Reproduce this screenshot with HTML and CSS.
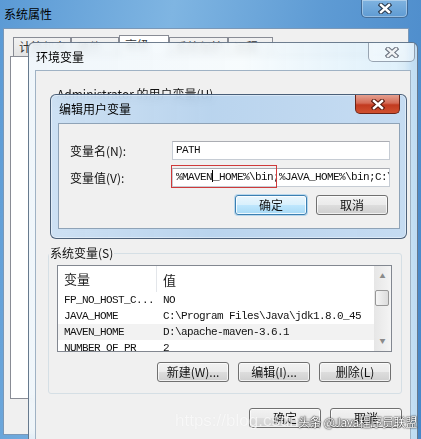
FILE: index.html
```html
<!DOCTYPE html>
<html lang="zh-CN">
<head>
  <meta charset="UTF-8"/>
  <title>环境变量</title>
  <link rel="stylesheet" href="styles.css">
</head>
<body>
  <div class="desk">
    <!-- System properties window (background) -->
    <div class="sys-win">
      <div class="titlebar sys-titlebar">
        <span class="title">系统属性</span>
        <span class="close-btn sys-close">
          <svg viewBox="0 0 14 11" width="14" height="11"><path class="x-outline" d="M3 2L11 9M11 2L3 9"/><path class="x-fill" d="M3 2L11 9M11 2L3 9"/></svg>
        </span>
      </div>
      <div class="sys-body">
        <div class="tabs">
          <span class="tab tab-first">计算机名</span>
          <span class="tab">硬件</span>
          <span class="tab tab-on">高级</span>
          <span class="tab">系统保护</span>
          <span class="tab">远程</span>
        </div>
        <div class="tab-page"></div>
      </div>
    </div>

    <!-- Environment variables dialog -->
    <div class="env-win">
      <div class="titlebar env-titlebar">
        <span class="title">环境变量</span>
        <span class="close-btn env-close">
          <svg viewBox="0 0 14 11" width="14" height="11"><path class="x-outline" d="M3 2L11 9M11 2L3 9"/><path class="x-fill" d="M3 2L11 9M11 2L3 9"/></svg>
        </span>
      </div>
      <div class="env-body">
        <div class="user-label">Administrator 的用户变量(U)</div>
        <div class="user-area"></div>

        <fieldset class="group">
          <legend>系统变量(S)</legend>
          <div class="group-inner">
            <div class="list">
              <div class="list-main">
                <div class="list-head">
                  <span class="col col-name">变量</span>
                  <span class="col col-val">值</span>
                </div>
                <div class="list-row">
                  <span class="col col-name">FP_NO_HOST_C...</span>
                  <span class="col col-val">NO</span>
                </div>
                <div class="list-row">
                  <span class="col col-name">JAVA_HOME</span>
                  <span class="col col-val">C:\Program Files\Java\jdk1.8.0_45</span>
                </div>
                <div class="list-row row-hover">
                  <span class="col col-name">MAVEN_HOME</span>
                  <span class="col col-val">D:\apache-maven-3.6.1</span>
                </div>
                <div class="list-row">
                  <span class="col col-name">NUMBER_OF_PR</span>
                  <span class="col col-val">2</span>
                </div>
              </div>
              <div class="scrollbar">
                <span class="sb-btn">&#9650;</span>
                <div class="sb-track"><div class="sb-thumb"></div></div>
                <span class="sb-btn">&#9660;</span>
              </div>
            </div>
            <div class="btn-row group-btns">
              <button class="btn">新建(W)...</button>
              <button class="btn">编辑(I)...</button>
              <button class="btn">删除(L)</button>
            </div>
          </div>
        </fieldset>

        <div class="btn-row env-btns">
          <button class="btn">确定</button>
          <button class="btn">取消</button>
        </div>
      </div>
    </div>

    <!-- Edit user variable dialog (front) -->
    <div class="edit-win">
      <div class="titlebar edit-titlebar">
        <span class="title">编辑用户变量</span>
        <span class="close-btn edit-close">
          <svg viewBox="0 0 14 11" width="14" height="11"><path class="x-outline" d="M3 2L11 9M11 2L3 9"/><path class="x-fill" d="M3 2L11 9M11 2L3 9"/></svg>
        </span>
      </div>
      <div class="edit-body">
        <div class="field-row">
          <span class="field-label">变量名(N):</span>
          <div class="field-wrap">
            <div class="field">PATH</div>
          </div>
        </div>
        <div class="field-row">
          <span class="field-label">变量值(V):</span>
          <div class="field-wrap">
            <div class="field">%MAVEN<span class="caret"></span>_HOME%\bin;%JAVA_HOME%\bin;C:\Windows</div>
            <span class="mark-box"></span>
          </div>
        </div>
        <div class="btn-row edit-btns">
          <button class="btn btn-default">确定</button>
          <button class="btn">取消</button>
        </div>
      </div>
    </div>

    <div class="watermark">
      <span class="wm-url">https://blog.csdn.net/</span>
      <span class="wm-tag">头条 @Java程序员联盟</span>
    </div>
  </div>
</body>
</html>
```

FILE: styles.css
```css
*, *::before, *::after {
  box-sizing: border-box;
}
body {
  margin: 0;
  padding: 0;
  overflow: hidden;
  font-family: "Noto Sans CJK SC", "Open Sans", sans-serif;
  font-size: 12px;
  color: #1e1e1e;
  background: #4d8ccb;
}

.desk {
  position: relative;
  width: 421px;
  height: 439px;
  overflow: hidden;
}

/* shared window bits */
.titlebar {
  display: flex;
  justify-content: space-between;
  align-items: flex-start;
}
.title {
  line-height: 28px;
  color: #000;
}
.close-btn {
  display: flex;
  align-items: center;
  justify-content: center;
  width: 47px;
  height: 19px;
  border-radius: 0 0 5px 5px;
}
.close-btn svg {
  display: block;
}
.x-outline {
  fill: none;
  stroke: #2b3b4f;
  stroke-width: 4.6;
  stroke-linecap: square;
}
.x-fill {
  fill: none;
  stroke: #fff;
  stroke-width: 2.4;
  stroke-linecap: square;
}

/* system properties */
.sys-win {
  width: 421px;
  height: 439px;
  background: linear-gradient(100deg, #5b9ad5 0%, #7fb5e2 35%, #5e9bd4 65%, #4686c8 100%);
}
.sys-titlebar {
  height: 28px;
  padding: 0 13px 0 4px;
}
.sys-close {
  height: 18px;
  border: 1px solid rgba(25, 55, 95, 0.55);
  border-top: none;
  background: linear-gradient(#7fb3e0, #5f9bd3);
  box-shadow: inset 0 0 0 1px rgba(255, 255, 255, 0.35);
}
.sys-body {
  height: 407px;
  margin: 0 12px 0 3px;
  padding: 6px 6px 0 6px;
  background: #f0f0f0;
  border: 1px solid #7a98b8;
}
.tabs {
  display: flex;
  align-items: flex-end;
  height: 21px;
  padding-left: 3px;
}
.tab {
  height: 19px;
  padding: 0 5px;
  line-height: 18px;
  color: #333;
  border: 1px solid #898c95;
  border-bottom: none;
  background: linear-gradient(#f2f2f2, #e3e3e3);
  white-space: nowrap;
  overflow: hidden;
}
.tab-first { width: 58px; }
.tab:nth-child(2) { width: 48px; }
.tab-on {
  width: 50px;
  height: 21px;
  background: #fff;
}
.tab:nth-child(4) { width: 59px; }
.tab:nth-child(5) { width: 45px; }
.tab-page {
  height: 343px;
  background: #fff;
  border: 1px solid #898c95;
}

/* environment variables */
.env-win {
  position: absolute;
  left: 28px;
  top: 42px;
  width: 390px;
  height: 420px;
  border: 1px solid rgba(40, 60, 85, 0.65);
  border-radius: 6px 6px 0 0;
  background: linear-gradient(90deg, rgba(238, 245, 250, 0.9), rgba(246, 251, 253, 0.88) 55%, rgba(214, 236, 250, 0.84));
  backdrop-filter: blur(3px);
}
.env-titlebar {
  height: 27px;
  padding: 0 2px 0 7px;
}
.env-close {
  border: 1px solid rgba(80, 95, 115, 0.55);
  border-top: none;
  background: rgba(255, 255, 255, 0.45);
}
.env-close .x-outline { stroke: #6c7480; }
.env-close .x-fill { stroke: #f1f3f5; }
.env-body {
  height: 392px;
  margin: 0 6px;
  padding: 0 8px 0 12px;
  background: #f0f0f0;
  border: 1px solid #9fb2c4;
}
.user-label {
  margin: 15px 0 0 9px;
  line-height: 16px;
  color: #111;
}
.user-area {
  height: 143px;
}

.group {
  margin: 0;
  padding: 4px 9px 11px 0;
  border: 1px solid #d5dfe5;
  border-radius: 3px;
}
.group legend {
  padding: 0 1px;
  line-height: 16px;
  color: #111;
}
.group-inner {
  padding-left: 8px;
}

.list {
  display: flex;
  height: 87px;
  background: #fff;
  border: 1px solid #828790;
  overflow: hidden;
}
.list-main {
  flex: 1;
  overflow: hidden;
}
.list-head {
  display: flex;
  height: 26px;
  align-items: center;
  font-size: 13px;
  color: #1b1b1b;
}
.list-head .col-name {
  height: 26px;
  line-height: 26px;
  border-right: 1px solid #e3e6ea;
}
.list-row {
  display: flex;
  height: 16px;
  line-height: 16px;
  font-family: "Liberation Mono", monospace;
  font-size: 11px;
  letter-spacing: -0.6px;
  color: #111;
}
.row-hover {
  background: #f2f2f2;
}
.col {
  white-space: nowrap;
  overflow: hidden;
}
.col-name {
  width: 99px;
  padding-left: 6px;
  flex: none;
}
.col-val {
  padding-left: 6px;
}

.scrollbar {
  display: flex;
  flex-direction: column;
  width: 17px;
  background: linear-gradient(90deg, #e6e6e6, #f4f4f4);
}
.sb-btn {
  height: 20px;
  line-height: 20px;
  text-align: center;
  font-size: 6px;
  color: #8a8a8a;
}
.sb-track {
  flex: 1;
  padding: 4px 2px 0 1px;
}
.sb-thumb {
  height: 16px;
  border: 1px solid #979797;
  border-radius: 2px;
  background: linear-gradient(90deg, #f5f5f5, #dcdcdc);
}

/* buttons */
.btn-row {
  display: flex;
  justify-content: flex-end;
  gap: 9px;
}
.btn {
  width: 72px;
  height: 20px;
  padding: 0;
  font-family: "Noto Sans CJK SC", sans-serif;
  font-size: 12px;
  line-height: 18px;
  color: #111;
  border: 1px solid #707070;
  border-radius: 3px;
  background: linear-gradient(#f2f2f2 0%, #ebebeb 48%, #dddddd 52%, #cfcfcf 100%);
  box-shadow: inset 0 0 0 1px rgba(255, 255, 255, 0.7);
}
.btn-default {
  border-color: #3c7fb1;
  background: linear-gradient(#eaf6fd 0%, #d9f0fc 48%, #bee6fd 52%, #a7d9f5 100%);
  box-shadow: inset 0 0 0 1px rgba(255, 255, 255, 0.8), 0 0 0 1px rgba(80, 170, 230, 0.35);
}
.group-btns {
  margin-top: 10px;
  margin-right: 1px;
}
.env-btns {
  margin-top: 14px;
}

/* edit user variable */
.edit-win {
  position: absolute;
  left: 50px;
  top: 94px;
  width: 357px;
  height: 145px;
  border: 1px solid rgba(35, 55, 80, 0.75);
  border-radius: 6px;
  background: linear-gradient(90deg, rgba(200, 222, 243, 0.88), rgba(176, 207, 237, 0.85) 45%, rgba(190, 216, 242, 0.86));
  backdrop-filter: blur(4px);
  box-shadow: 0 0 0 1px rgba(255, 255, 255, 0.4) inset;
}
.edit-titlebar {
  height: 28px;
  padding: 0 6px 0 8px;
}
.edit-close {
  width: 45px;
  border: 1px solid #6b2418;
  border-top: none;
  background: linear-gradient(#e5a090 0%, #d46a55 45%, #c23a20 55%, #d0502f 100%);
}
.edit-close .x-outline { stroke: #5a1c10; }
.edit-body {
  height: 106px;
  margin: 0 6px 0 7px;
  padding: 17px 9px 0 11px;
  background: #f0f0f0;
  border: 1px solid #8fa3b7;
}
.field-row {
  display: flex;
  align-items: center;
  margin-bottom: 8px;
}
.field-label {
  width: 102px;
  flex: none;
  color: #111;
}
.field-wrap {
  position: relative;
  flex: 1;
  min-width: 0;
}
.field {
  height: 19px;
  padding-left: 3px;
  line-height: 17px;
  font-family: "Liberation Mono", monospace;
  font-size: 11px;
  letter-spacing: -0.6px;
  white-space: nowrap;
  overflow: hidden;
  background: #fff;
  border: 1px solid #c6ccd4;
  border-top-color: #abadb3;
  color: #111;
}
.caret {
  display: inline-block;
  width: 0;
  height: 12px;
  vertical-align: -2px;
  border-left: 1px solid #000;
}
.mark-box {
  position: absolute;
  left: -1px;
  top: -3px;
  width: 106px;
  height: 23px;
  border: 1px solid #cf3a3a;
}
.edit-btns {
  margin-top: 5px;
  margin-right: 2px;
}

/* overlay watermark */
.watermark {
  position: absolute;
  left: 175px;
  top: 411px;
  display: flex;
  align-items: center;
  white-space: nowrap;
}
.wm-url {
  width: 123px;
  overflow: hidden;
  font-family: "Liberation Sans", sans-serif;
  font-size: 17px;
  color: rgba(255, 255, 255, 0.75);
  text-shadow: 0 0 1px rgba(0, 0, 0, 0.08);
}
.wm-tag {
  font-size: 12px;
  letter-spacing: -0.4px;
  color: #fff;
  text-shadow: 0 0 2px rgba(0, 0, 0, 0.9), 0 0 1px #000;
}
```
